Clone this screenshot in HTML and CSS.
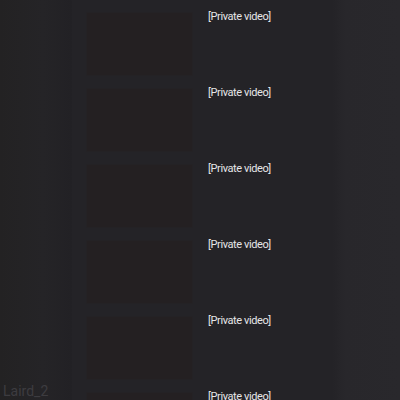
FILE: index.html
```html
<html lang="en">
<head>
    <meta charset="UTF-8">
    <meta name="viewport" content="width=device-width, initial-scale=1.0">
    <title>Playlist</title>
    <link rel="stylesheet" href="styles.css">
</head>
<body>
    <div class="page">
        <div class="side"></div>
        <div class="list">
            <div class="item"><div class="thumb"></div><div class="title">[Private video]</div></div>
            <div class="item"><div class="thumb"></div><div class="title">[Private video]</div></div>
            <div class="item"><div class="thumb"></div><div class="title">[Private video]</div></div>
            <div class="item"><div class="thumb"></div><div class="title">[Private video]</div></div>
            <div class="item"><div class="thumb"></div><div class="title">[Private video]</div></div>
            <div class="item"><div class="thumb"></div><div class="title">[Private video]</div></div>
        </div>
        <div class="right"></div>
    </div>
    <div class="user">Laird_2</div>
</body>
</html>
```
FILE: styles.css
```css
body{
    margin:0;
    background-color:#232225;
    font-family:Roboto, "Liberation Sans", sans-serif;
    overflow:hidden;
}

.page{
    display:flex;
    height:400px;
}

.side{
    width:72px;
    background:linear-gradient(to right,#232223,#252427 60%,#222125);
}

.list{
    width:246px;
    padding-top:9px;
    padding-left:14px;
    background-color:#242327;
}

.item{
    display:flex;
    height:76px;
}

.thumb{
    width:107px;
    height:64px;
    margin-top:3px;
    background-color:#242022;
    border:1px solid #242225;
    box-sizing:border-box;
}

.title{
    margin-left:15px;
    padding-top:1px;
    font-size:11px;
    line-height:13px;
    letter-spacing:-0.4px;
    color:#e6e6e8;
}

.right{
    flex:1;
    background:linear-gradient(to right,#242327,#28272b 20%,#29282c);
}

.user{
    position:absolute;
    left:3px;
    top:383px;
    font-size:14px;
    color:#3d3c40;
}
```
